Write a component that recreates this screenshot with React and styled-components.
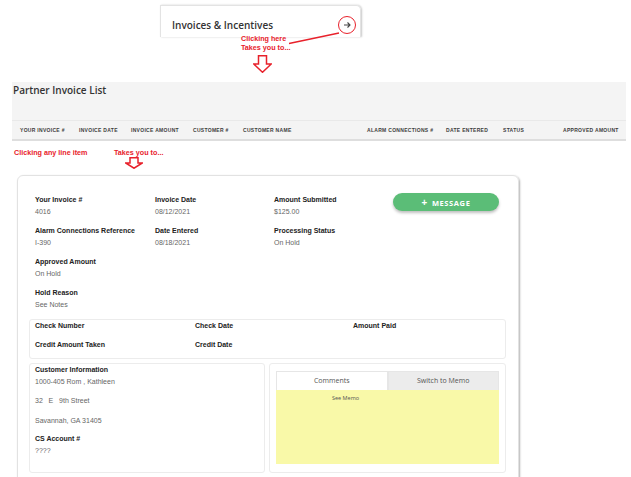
// ==========================================================================
// Invoice walkthrough: teaser card -> invoice list -> invoice detail
// ==========================================================================
import React from 'react';
import styled, { createGlobalStyle } from 'styled-components';

const RED = '#e8212b';

const GlobalStyle = createGlobalStyle`
  html, body {
    margin: 0;
    padding: 0;
    background: #fff;
  }
  body {
    font-family: "Liberation Sans", Arial, sans-serif;
  }
`;

const Page = styled.div`
  position: relative;
  width: 631px;
  overflow: hidden;
`;

// --- teaser ---------------------------------------------------------------

const Teaser = styled.section`
  position: relative;
`;

const TeaserCard = styled.div`
  display: flex;
  align-items: center;
  justify-content: space-between;
  box-sizing: border-box;
  width: 201px;
  height: 32px;
  margin: 5px 0 0 160px;
  padding: 6px 4px 0 11px;
  border: 1px solid #e3e3e3;
  border-bottom: none;
  border-radius: 0 5px 0 0;
  box-shadow: 1px 0 2px rgba(0, 0, 0, 0.22);
`;

const CardTitle = styled.h2`
  margin: 0;
  font: 600 10px/14px "Open Sans", sans-serif;
  color: #333;
`;

const RoundButton = styled.span`
  display: flex;
  align-items: center;
  justify-content: center;
  box-sizing: border-box;
  width: 18px;
  height: 18px;
  border: 1.5px solid ${RED};
  border-radius: 50%;
`;

const Note = styled.div`
  font-weight: bold;
  font-size: 7.2px;
  line-height: 9px;
  color: ${RED};
  margin: ${p => p.$margin || '0'};
`;

const Overlay = styled.svg`
  position: absolute;
  left: 0;
  top: 0;
  pointer-events: none;
`;

const DownArrow = styled.svg`
  display: block;
  margin: ${p => p.$margin || '0'};
`;

// --- invoice list -----------------------------------------------------------

const ListPanel = styled.section`
  margin: 9px 5px 0 12px;
  background: #f4f4f4;
  border-bottom: 2px solid #dedede;
`;

const ListTitle = styled.h1`
  margin: 0;
  height: 38px;
  padding: 1px 0 0 1px;
  box-sizing: border-box;
  font: 600 10px/14px "Open Sans", sans-serif;
  color: #333;
`;

const HeaderRow = styled.div`
  display: grid;
  grid-template-columns: 59px 52px 62px 50px 124px 79px 57px 60px auto;
  align-items: center;
  height: 18px;
  padding-left: 8px;
  border-top: 1px solid #e9e9e9;
`;

const HeaderCell = styled.span`
  font-size: 5px;
  font-weight: bold;
  letter-spacing: 0.3px;
  color: #3d3d3d;
  text-transform: uppercase;
  white-space: nowrap;
`;

const NoteRow = styled.div`
  display: grid;
  grid-template-columns: 100px auto;
  padding: 7px 0 0 14px;
`;

// --- invoice detail ---------------------------------------------------------

const DetailCard = styled.section`
  width: 502px;
  box-sizing: border-box;
  margin: 6px 0 0 17px;
  padding: 18px 12px 10px 11px;
  border: 1px solid #e2e2e2;
  border-radius: 6px;
  box-shadow: 1px 1px 2px rgba(0, 0, 0, 0.3);
`;

const InfoGrid = styled.div`
  display: grid;
  grid-template-columns: 120px 119px 119px 106px;
  row-gap: 7px;
  padding-left: 6px;
  margin-bottom: 8px;
`;

const Field = styled.div`
  grid-column: ${p => p.$col || 'auto'};
`;

const Label = styled.div`
  font-size: 7px;
  line-height: 12px;
  font-weight: bold;
  color: #222;
  white-space: nowrap;
  margin-top: ${p => p.$gap || 0}px;
`;

const Value = styled.div`
  font-size: 7px;
  line-height: 12px;
  color: #666;
  white-space: pre;
  margin-top: ${p => p.$gap || 0}px;
`;

const MessageButton = styled.button`
  grid-column: 4;
  grid-row: 1;
  align-self: start;
  margin-top: -1px;
  height: 18px;
  border: none;
  border-radius: 9px;
  background: #5bbd77;
  color: #fff;
  font: 700 7.5px/18px "Open Sans", sans-serif;
  letter-spacing: 0.6px;
  box-shadow: 0 2px 3px rgba(0, 0, 0, 0.25);
  padding: 0;
  span {
    font-size: 10px;
    margin-right: 4px;
  }
`;

const Box = styled.div`
  box-sizing: border-box;
  border: 1px solid #ececec;
  border-radius: 3px;
`;

const PaymentBox = styled(Box)`
  display: grid;
  grid-template-columns: 160px 158px 1fr;
  row-gap: 7px;
  padding: 0 0 7px 5px;
`;

const BottomRow = styled.div`
  display: grid;
  grid-template-columns: 236px 237px;
  column-gap: 4px;
  margin-top: 4px;
`;

const CustomerBox = styled(Box)`
  padding: 0 5px;
`;

const CommentsBox = styled(Box)`
  padding: 7px 6px 8px 6px;
`;

const Tabs = styled.div`
  display: grid;
  grid-template-columns: 1fr 1fr;
  height: 18px;
`;

const Tab = styled.div`
  text-align: center;
  font: 400 7px/18px "Open Sans", sans-serif;
  color: #555;
  background: ${p => (p.$active ? '#fff' : '#ececec')};
  border: 1px solid #e6e6e6;
  border-bottom: none;
  box-sizing: border-box;
`;

const Memo = styled.div`
  height: 75px;
  background: #f9f9a8;
  padding: 5px 0 0 56px;
  box-sizing: border-box;
  font: 400 5.5px/8px "Open Sans", sans-serif;
  color: #555;
`;

const listColumns = [
  'Your Invoice #',
  'Invoice Date',
  'Invoice Amount',
  'Customer #',
  'Customer Name',
  'Alarm Connections #',
  'Date Entered',
  'Status',
  'Approved Amount',
];

const invoiceFields = [
  { label: 'Your Invoice #', value: '4016' },
  { label: 'Invoice Date', value: '08/12/2021' },
  { label: 'Amount Submitted', value: '$125.00' },
  { label: 'Alarm Connections Reference', value: 'I-390', col: 1 },
  { label: 'Date Entered', value: '08/18/2021' },
  { label: 'Processing Status', value: 'On Hold' },
  { label: 'Approved Amount', value: 'On Hold', col: 1 },
  { label: 'Hold Reason', value: 'See Notes', col: 1 },
];

const ArrowShape = ({ width, height, shaft }) => {
  const mid = width / 2;
  const neck = height / 2;
  return (
    <polygon
      points={`${mid - shaft / 2},0.75 ${mid + shaft / 2},0.75 ${mid + shaft / 2},${neck} ${width - 0.75},${neck} ${mid},${height - 0.75} 0.75,${neck} ${mid - shaft / 2},${neck}`}
      fill="#fff"
      stroke={RED}
      strokeWidth="1.5"
      strokeLinejoin="miter"
    />
  );
};

const App = () => (
  <Page>
    <GlobalStyle />

    <Teaser>
      <TeaserCard>
        <CardTitle>Invoices &amp; Incentives</CardTitle>
        <RoundButton>
          <svg width="8" height="8" viewBox="0 0 8 8">
            <path d="M1 4h6M4.5 1.5L7 4L4.5 6.5" fill="none" stroke="#444" strokeWidth="1.1" />
          </svg>
        </RoundButton>
      </TeaserCard>
      <Note $margin="-3px 0 0 241px">
        Clicking here
        <br />
        Takes you to...
      </Note>
      <DownArrow $margin="3px 0 0 253px" width="19" height="18" viewBox="0 0 19 18">
        <ArrowShape width={19} height={18} shaft={8} />
      </DownArrow>
      <Overlay width="631" height="60">
        <line x1="339" y1="28" x2="289" y2="38.5" stroke={RED} strokeWidth="1.3" />
      </Overlay>
    </Teaser>

    <ListPanel>
      <ListTitle>Partner Invoice List</ListTitle>
      <HeaderRow>
        {listColumns.map(c => (
          <HeaderCell key={c}>{c}</HeaderCell>
        ))}
      </HeaderRow>
    </ListPanel>

    <NoteRow>
      <Note>Clicking any line item</Note>
      <div>
        <Note>Takes you to...</Note>
        <DownArrow $margin="0 0 0 11px" width="18" height="12" viewBox="0 0 18 12">
          <ArrowShape width={18} height={12} shaft={8} />
        </DownArrow>
      </div>
    </NoteRow>

    <DetailCard>
      <InfoGrid>
        {invoiceFields.map(f => (
          <Field key={f.label} $col={f.col}>
            <Label>{f.label}</Label>
            <Value>{f.value}</Value>
          </Field>
        ))}
        <MessageButton>
          <span>+</span>MESSAGE
        </MessageButton>
      </InfoGrid>

      <PaymentBox>
        <Label>Check Number</Label>
        <Label>Check Date</Label>
        <Label>Amount Paid</Label>
        <Label>Credit Amount Taken</Label>
        <Label>Credit Date</Label>
      </PaymentBox>

      <BottomRow>
        <CustomerBox>
          <Label>Customer Information</Label>
          <Value>1000-405 Rom , Kathleen</Value>
          <Value $gap={7}>32   E   9th Street</Value>
          <Value $gap={8}>Savannah, GA 31405</Value>
          <Label $gap={6}>CS Account #</Label>
          <Value>????</Value>
        </CustomerBox>
        <CommentsBox>
          <Tabs>
            <Tab $active>Comments</Tab>
            <Tab>Switch to Memo</Tab>
          </Tabs>
          <Memo>See Memo</Memo>
        </CommentsBox>
      </BottomRow>
    </DetailCard>
  </Page>
);

export default App;
